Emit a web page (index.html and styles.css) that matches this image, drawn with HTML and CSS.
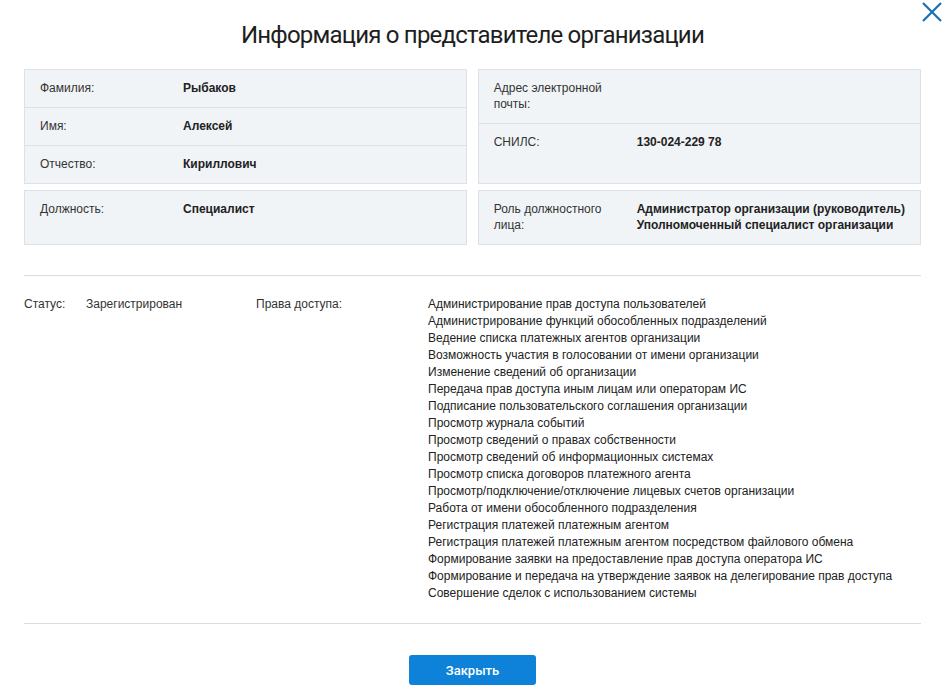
FILE: index.html
```html
<!doctype html>
<html lang="ru">
<head>
	<meta charset="UTF-8">
	<title>Информация о представителе организации</title>
	<link rel="stylesheet" href="styles.css">
</head>
<body>
<div class="modal">
	<button class="close" title="Закрыть">
		<svg width="22" height="22" viewBox="0 0 22 22"><path d="M2 2L20 20M20 2L2 20" stroke="#1a6fb4" stroke-width="2.2" fill="none"/></svg>
	</button>
	<h1 class="title">Информация о представителе организации</h1>

	<div class="cards">
		<div class="card">
			<div class="row"><div class="label">Фамилия:</div><div class="value">Рыбаков</div></div>
			<div class="row"><div class="label">Имя:</div><div class="value">Алексей</div></div>
			<div class="row"><div class="label">Отчество:</div><div class="value">Кириллович</div></div>
		</div>
		<div class="card">
			<div class="row"><div class="label">Адрес электронной почты:</div><div class="value"></div></div>
			<div class="row grow"><div class="label">СНИЛС:</div><div class="value">130-024-229 78</div></div>
		</div>
		<div class="card">
			<div class="row grow"><div class="label">Должность:</div><div class="value">Специалист</div></div>
		</div>
		<div class="card">
			<div class="row grow"><div class="label">Роль должностного лица:</div><div class="value">Администратор организации (руководитель)<br>Уполномоченный специалист организации</div></div>
		</div>
	</div>

	<div class="status">
		<div>Статус:</div>
		<div>Зарегистрирован</div>
		<div>Права доступа:</div>
		<ul class="rights">
			<li>Администрирование прав доступа пользователей</li>
			<li>Администрирование функций обособленных подразделений</li>
			<li>Ведение списка платежных агентов организации</li>
			<li>Возможность участия в голосовании от имени организации</li>
			<li>Изменение сведений об организации</li>
			<li>Передача прав доступа иным лицам или операторам ИС</li>
			<li>Подписание пользовательского соглашения организации</li>
			<li>Просмотр журнала событий</li>
			<li>Просмотр сведений о правах собственности</li>
			<li>Просмотр сведений об информационных системах</li>
			<li>Просмотр списка договоров платежного агента</li>
			<li>Просмотр/подключение/отключение лицевых счетов организации</li>
			<li>Работа от имени обособленного подразделения</li>
			<li>Регистрация платежей платежным агентом</li>
			<li>Регистрация платежей платежным агентом посредством файлового обмена</li>
			<li>Формирование заявки на предоставление прав доступа оператора ИС</li>
			<li>Формирование и передача на утверждение заявок на делегирование прав доступа</li>
			<li>Совершение сделок с использованием системы</li>
		</ul>
	</div>

	<div class="footer">
		<button class="btn">Закрыть</button>
	</div>
</div>
</body>
</html>
```

FILE: styles.css
```css
body{
	margin: 0;
	background: #fff;
	font-family: "Liberation Sans", Arial, sans-serif;
	font-size: 12px;
	color: #222;
}
.modal{
	position: relative;
	padding: 0 26px 0 24px;
}
.close{
	position: absolute;
	top: 1px;
	right: 4px;
	border: 0;
	background: none;
	padding: 0;
	cursor: pointer;
}
.title{
	margin: 0 0 19px;
	padding-top: 20px;
	font-family: Roboto, sans-serif;
	font-weight: 400;
	font-size: 24px;
	line-height: 30px;
	letter-spacing: -0.8px;
	text-align: center;
	color: #1e1e1e;
}
.cards{
	display: grid;
	grid-template-columns: 1fr 1fr;
	column-gap: 11px;
	row-gap: 6px;
}
.card{
	display: flex;
	flex-direction: column;
	background: #f1f4f7;
	border: 1px solid #dbe1e7;
}
.row{
	display: flex;
	padding: 10px 15px 11px;
	line-height: 16px;
}
.row + .row{
	border-top: 1px solid #dbe1e7;
}
.row.grow{
	flex: 1;
}
.label{
	width: 143px;
	flex: none;
	color: #333;
	padding-right: 10px;
	box-sizing: border-box;
}
.value{
	font-weight: bold;
	color: #222;
	white-space: nowrap;
}
.status{
	display: grid;
	grid-template-columns: 62px 170px 172px 1fr;
	margin-top: 30px;
	border-top: 1px solid #dcdcdc;
	border-bottom: 1px solid #dcdcdc;
	padding: 20px 0 21px;
	line-height: 17px;
	color: #333;
}
.rights{
	list-style: none;
	margin: 0;
	padding: 0;
	color: #222;
}
.footer{
	display: flex;
	justify-content: center;
	padding: 31px 0 0 0;
}
.btn{
	width: 127px;
	height: 30px;
	border: 0;
	border-radius: 3px;
	background: #0e82d8;
	color: #fff;
	font-family: Roboto, sans-serif;
	font-weight: 500;
	font-size: 13px;
	cursor: pointer;
}
```
